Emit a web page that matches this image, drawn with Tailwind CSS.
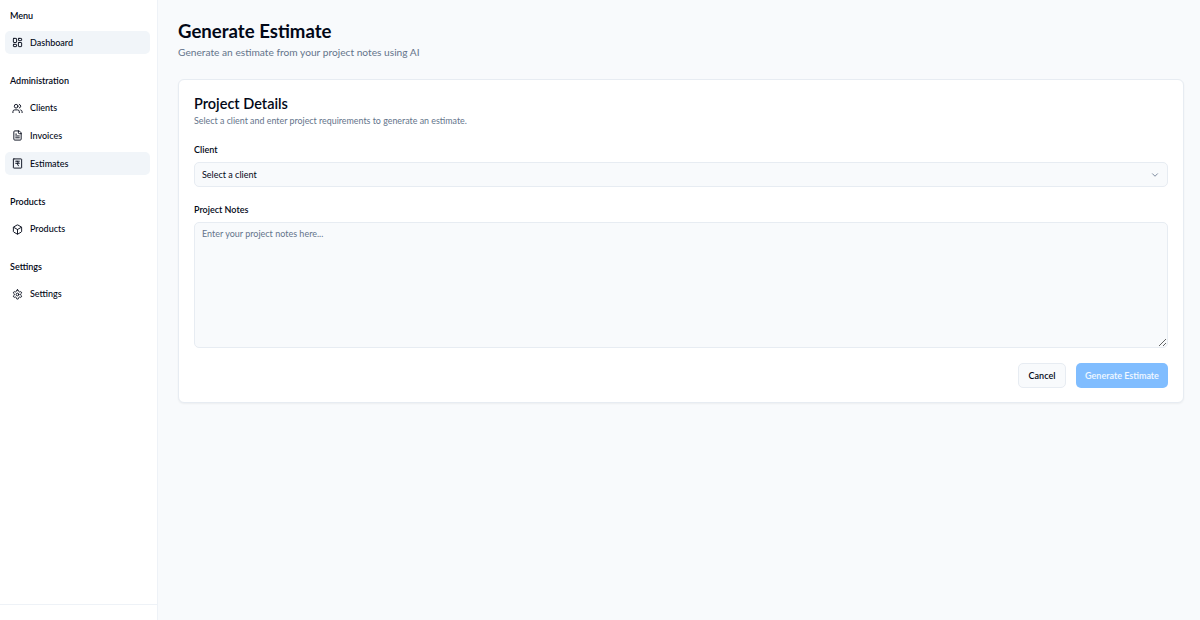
<!DOCTYPE html>
<html lang="en">
<head>
    <meta charset="UTF-8">
    <meta name="viewport" content="width=device-width, initial-scale=1.0">
    <title>Generate Estimate</title>
    <script src="https://cdn.jsdelivr.net/npm/@tailwindcss/browser@4"></script>
</head>
<body class="bg-[#f8fafc] h-[620px] overflow-hidden flex font-['Lato',sans-serif] text-[#020817]">
    <!-- sidebar -->
    <aside class="w-[158px] h-full shrink-0 bg-white border-r border-[#eef2f7] flex flex-col">
        <nav class="flex-1 pl-[5px] pr-[7px] pt-[10px] text-[9px] font-medium">
            <h2 class="px-[5px] h-[11px] leading-[11px] font-semibold">Menu</h2>
            <a class="mt-[10px] flex items-center gap-[7px] h-[23px] px-[7px] rounded-[5px] bg-[#f1f5f9]">
                <svg class="w-[11px] h-[11px]" viewBox="0 0 24 24" fill="none" stroke="currentColor" stroke-width="2" stroke-linecap="round" stroke-linejoin="round"><rect width="7" height="9" x="3" y="3" rx="1"/><rect width="7" height="5" x="14" y="3" rx="1"/><rect width="7" height="9" x="14" y="12" rx="1"/><rect width="7" height="5" x="3" y="16" rx="1"/></svg>
                Dashboard
            </a>

            <h2 class="mt-[20.5px] px-[5px] h-[11px] leading-[11px] font-semibold">Administration</h2>
            <a class="mt-[11px] flex items-center gap-[7px] h-[23px] px-[7px] rounded-[5px]">
                <svg class="w-[11px] h-[11px]" viewBox="0 0 24 24" fill="none" stroke="currentColor" stroke-width="2" stroke-linecap="round" stroke-linejoin="round"><path d="M16 21v-2a4 4 0 0 0-4-4H6a4 4 0 0 0-4 4v2"/><circle cx="9" cy="7" r="4"/><path d="M22 21v-2a4 4 0 0 0-3-3.87"/><path d="M16 3.13a4 4 0 0 1 0 7.75"/></svg>
                Clients
            </a>
            <a class="mt-[4.5px] flex items-center gap-[7px] h-[23px] px-[7px] rounded-[5px]">
                <svg class="w-[11px] h-[11px]" viewBox="0 0 24 24" fill="none" stroke="currentColor" stroke-width="2" stroke-linecap="round" stroke-linejoin="round"><path d="M15 2H6a2 2 0 0 0-2 2v16a2 2 0 0 0 2 2h12a2 2 0 0 0 2-2V7Z"/><path d="M14 2v4a2 2 0 0 0 2 2h4"/><path d="M10 9H8"/><path d="M16 13H8"/><path d="M16 17H8"/></svg>
                Invoices
            </a>
            <a class="mt-[5px] flex items-center gap-[7px] h-[23px] px-[7px] rounded-[5px] bg-[#f1f5f9]">
                <svg class="w-[11px] h-[11px]" viewBox="0 0 24 24" fill="none" stroke="currentColor" stroke-width="2" stroke-linecap="round" stroke-linejoin="round"><rect width="18" height="20" x="3" y="2" rx="1"/><path d="M8 7h8"/><path d="M8 11.5h8"/><path d="M11 7c3.5 0 3.5 4.5 0 4.5l3 5.5"/></svg>
                Estimates
            </a>

            <h2 class="mt-[20.5px] px-[5px] h-[11px] leading-[11px] font-semibold">Products</h2>
            <a class="mt-[11px] flex items-center gap-[7px] h-[23px] px-[7px] rounded-[5px]">
                <svg class="w-[11px] h-[11px]" viewBox="0 0 24 24" fill="none" stroke="currentColor" stroke-width="2" stroke-linecap="round" stroke-linejoin="round"><path d="M21 8a2 2 0 0 0-1-1.73l-7-4a2 2 0 0 0-2 0l-7 4A2 2 0 0 0 3 8v8a2 2 0 0 0 1 1.73l7 4a2 2 0 0 0 2 0l7-4A2 2 0 0 0 21 16Z"/><path d="m3.3 7 8.7 5 8.7-5"/><path d="M12 22V12"/></svg>
                Products
            </a>

            <h2 class="mt-[20.5px] px-[5px] h-[11px] leading-[11px] font-semibold">Settings</h2>
            <a class="mt-[10.5px] flex items-center gap-[7px] h-[23px] px-[7px] rounded-[5px]">
                <svg class="w-[11px] h-[11px]" viewBox="0 0 24 24" fill="none" stroke="currentColor" stroke-width="2" stroke-linecap="round" stroke-linejoin="round"><path d="M12.22 2h-.44a2 2 0 0 0-2 2v.18a2 2 0 0 1-1 1.73l-.43.25a2 2 0 0 1-2 0l-.15-.08a2 2 0 0 0-2.73.73l-.22.38a2 2 0 0 0 .73 2.73l.15.1a2 2 0 0 1 1 1.72v.51a2 2 0 0 1-1 1.74l-.15.09a2 2 0 0 0-.73 2.73l.22.38a2 2 0 0 0 2.73.73l.15-.08a2 2 0 0 1 2 0l.43.25a2 2 0 0 1 1 1.73V20a2 2 0 0 0 2 2h.44a2 2 0 0 0 2-2v-.18a2 2 0 0 1 1-1.73l.43-.25a2 2 0 0 1 2 0l.15.08a2 2 0 0 0 2.73-.73l.22-.39a2 2 0 0 0-.73-2.73l-.15-.08a2 2 0 0 1-1-1.74v-.5a2 2 0 0 1 1-1.74l.15-.09a2 2 0 0 0 .73-2.73l-.22-.38a2 2 0 0 0-2.73-.73l-.15.08a2 2 0 0 1-2 0l-.43-.25a2 2 0 0 1-1-1.73V4a2 2 0 0 0-2-2z"/><circle cx="12" cy="12" r="3"/></svg>
                Settings
            </a>
        </nav>
        <div class="h-[16px] border-t border-[#eef2f7]"></div>
    </aside>

    <!-- main -->
    <main class="flex-1 pl-[20px] pr-[16px] pt-[20px]">
        <h1 class="text-[18.6px] leading-[23px] font-bold">Generate Estimate</h1>
        <p class="mt-[1.5px] text-[10.2px] leading-[14px] text-[#64748b]">Generate an estimate from your project notes using AI</p>

        <section class="mt-[20.5px] h-[324px] bg-white border border-[#e7ecf2] rounded-[6px] shadow-xs px-[15px] pt-[15px]">
            <h2 class="text-[14.5px] leading-[18px] font-semibold">Project Details</h2>
            <p class="mt-[1.5px] text-[8.9px] leading-[11px] text-[#64748b]">Select a client and enter project requirements to generate an estimate.</p>

            <label class="block mt-[18px] text-[9px] leading-[11px] font-semibold">Client</label>
            <div class="mt-[7.5px] h-[25px] flex items-center justify-between px-[7px] bg-[#f8fafc] border border-[#e7ecf2] rounded-[5px] text-[9px]">
                <span>Select a client</span>
                <svg class="w-[10px] h-[10px] text-[#64748b]" viewBox="0 0 24 24" fill="none" stroke="currentColor" stroke-width="2" stroke-linecap="round" stroke-linejoin="round"><path d="m6 9 6 6 6-6"/></svg>
            </div>

            <label class="block mt-[17px] text-[9px] leading-[11px] font-semibold">Project Notes</label>
            <textarea readonly placeholder="Enter your project notes here..." class="block mt-[7px] w-full h-[126px] px-[7px] py-[4px] bg-[#f8fafc] border border-[#e7ecf2] rounded-[5px] text-[9px] placeholder:text-[#64748b] outline-none"></textarea>

            <div class="mt-[15px] flex justify-end gap-[10px]">
                <button class="h-[25px] w-[48px] bg-[#f8fafc] border border-[#e7ecf2] rounded-[5px] text-[9px] font-semibold">Cancel</button>
                <button class="h-[25px] w-[92px] bg-[#80bdff] rounded-[5px] text-[9px] font-semibold text-white/90">Generate Estimate</button>
            </div>
        </section>
    </main>
</body>
</html>
